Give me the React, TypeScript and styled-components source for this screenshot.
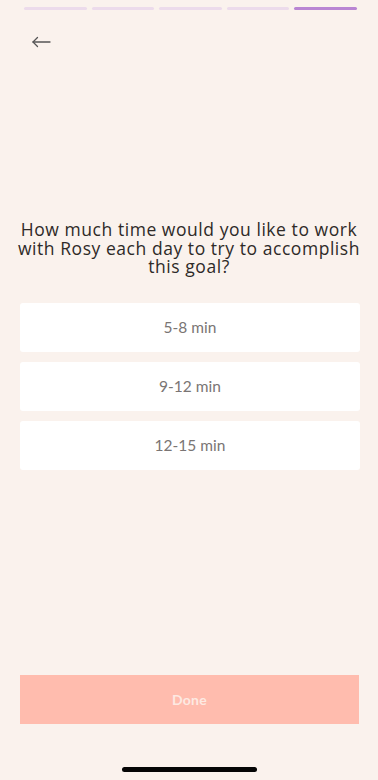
import * as React from 'react';
import styled, { createGlobalStyle } from 'styled-components';

const GlobalStyle = createGlobalStyle`
	html, body {
		margin: 0;
		padding: 0;
		background: #faf2ed;
	}
	* {
		box-sizing: border-box;
	}
`

const Screen = styled.main`
	width: 378px;
	height: 780px;
	display: flex;
	flex-direction: column;
	background: #faf2ed;
	font-family: Lato, "Open Sans", sans-serif;
	overflow: hidden;
`

const Progress = styled.div`
	display: flex;
	gap: 5px;
	padding: 7px 21px 0 24px;
`

const Segment = styled.div<{ $active?: boolean }>`
	flex: 1;
	height: 3px;
	border-radius: 2px;
	background: ${({ $active }) => ($active ? '#b985d3' : '#ecdbeb')};
`

const BackButton = styled.button`
	width: 24px;
	height: 20px;
	margin: 22px 0 0 29px;
	padding: 0;
	border: none;
	background: none;
	display: flex;
	align-items: center;
	justify-content: center;
	color: #555;
`

const Title = styled.h1`
	margin: 168px 0 0 0;
	padding: 0 6px;
	text-align: center;
	font-family: "Open Sans", Lato, sans-serif;
	font-weight: 400;
	font-size: 17.5px;
	line-height: 18.5px;
	color: #2e2a28;
	letter-spacing: 0.55px;
`

const Options = styled.div`
	display: flex;
	flex-direction: column;
	gap: 10px;
	padding: 0 18px 0 20px;
	margin-top: 27px;
`

const Option = styled.button`
	height: 49px;
	border: none;
	border-radius: 3px;
	background: #ffffff;
	font-family: Lato, "Open Sans", sans-serif;
	font-size: 15.5px;
	color: #7a7574;
	cursor: pointer;
`

const Footer = styled.div`
	margin-top: auto;
	display: flex;
	flex-direction: column;
	align-items: center;
	padding: 0 19px 8px 20px;
`

const DoneButton = styled.button`
	width: 100%;
	height: 49px;
	border: none;
	background: #ffbcae;
	color: #fde9e2;
	font-family: Lato, "Open Sans", sans-serif;
	font-weight: 700;
	font-size: 14px;
	letter-spacing: 0.3px;
`

const HomeIndicator = styled.div`
	width: 135px;
	height: 5px;
	border-radius: 3px;
	background: #050505;
	margin-top: 43px;
`

const options = ['5-8 min', '9-12 min', '12-15 min'];

export default function App() {
	return (
		<>
			<GlobalStyle />
			<Screen>
				<Progress>
					{[0, 1, 2, 3, 4].map(i => (
						<Segment key={i} $active={i === 4} />
					))}
				</Progress>
				<BackButton aria-label="Back">
					<svg width="20" height="12" viewBox="0 0 20 12" fill="none" stroke="currentColor" strokeWidth="1.3" strokeLinecap="round" strokeLinejoin="round">
						<path d="M19 6H2" />
						<path d="M6.5 1.5L2 6l4.5 4.5" />
					</svg>
				</BackButton>
				<Title>
					How much time would you like to work<br />
					with Rosy each day to try to accomplish<br />
					this goal?
				</Title>
				<Options>
					{options.map(o => (
						<Option key={o}>{o}</Option>
					))}
				</Options>
				<Footer>
					<DoneButton>Done</DoneButton>
					<HomeIndicator />
				</Footer>
			</Screen>
		</>
	)
}
